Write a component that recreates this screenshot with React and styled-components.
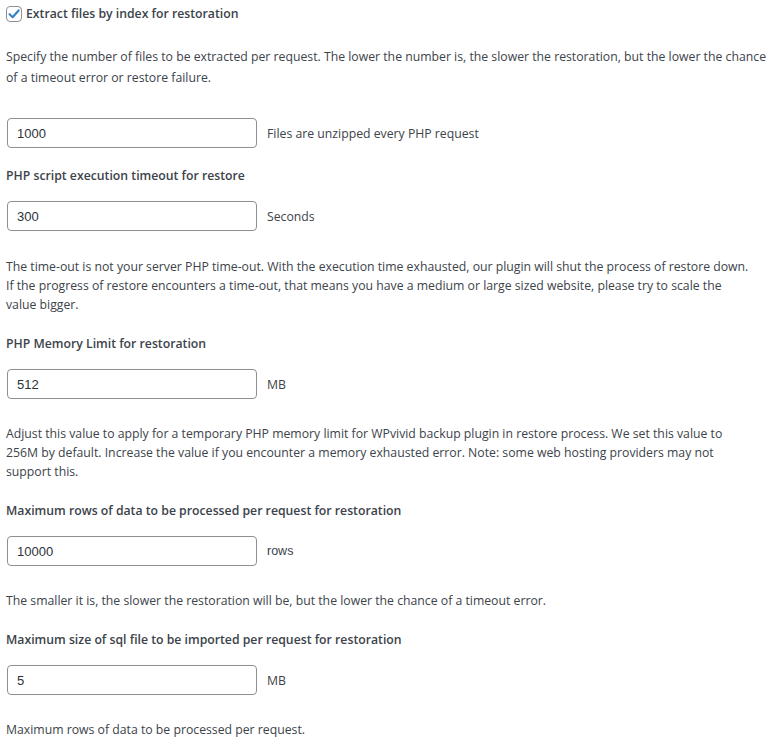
import React from "react";
import styled, { createGlobalStyle } from "styled-components";

const GlobalStyle = createGlobalStyle`
  body {
    margin: 0;
    background: #ffffff;
    color: #3c434a;
    font-family: "Open Sans", "Noto Sans", sans-serif;
    font-size: 12.25px;
  }
`;

const Page = styled.div`
  padding: 6px 6px 0 6px;
`;

const CheckRow = styled.label`
  display: flex;
  align-items: center;
  gap: 4px;
  height: 16px;
  font-weight: 600;
  line-height: 16px;
  cursor: pointer;
`;

const Box = styled.span`
  display: inline-flex;
  align-items: center;
  justify-content: center;
  width: 14px;
  height: 14px;
  border: 1px solid #8c8f94;
  border-radius: 4px;
  background: #fff;
`;

const Description = styled.p`
  margin: ${(p) => p.$top}px 0 0 0;
  max-width: ${(p) => (p.$narrow ? "745px" : "none")};
  line-height: ${(p) => p.$lh || 19}px;
`;

const Heading = styled.div`
  margin-top: ${(p) => p.$top || 18}px;
  font-weight: 600;
  line-height: 19px;
`;

const FieldRow = styled.div`
  display: flex;
  align-items: center;
  gap: 10px;
  margin-top: ${(p) => p.$top || 16}px;
  padding-left: 1px;
`;

const TextInput = styled.input`
  box-sizing: border-box;
  width: 250px;
  height: 30px;
  padding: 0 9px;
  border: 1px solid #8c8f94;
  border-radius: 4px;
  background: #fff;
  color: #2c3338;
  font-family: "Liberation Sans", Arial, sans-serif;
  font-size: 13px;
  outline: none;
`;

const Unit = styled.span`
  font-family: ${(p) => (p.$plain ? '"Liberation Sans", Arial, sans-serif' : "inherit")};
  font-size: ${(p) => (p.$plain ? "12.5px" : "inherit")};
`;

function Check() {
  return (
    <Box>
      <svg width="14" height="14" viewBox="0 0 14 14">
        <path d="M2.6 7.2 L5.6 10.2 L11.6 3.4" fill="none" stroke="#3582c4" strokeWidth="2.2" strokeLinecap="round" strokeLinejoin="round" />
      </svg>
    </Box>
  );
}

function Field({ value, unit, plain, top }) {
  return (
    <FieldRow $top={top}>
      <TextInput type="text" defaultValue={value} />
      <Unit $plain={plain}>{unit}</Unit>
    </FieldRow>
  );
}

export default function App() {
  return (
    <>
      <GlobalStyle />
      <Page>
        <CheckRow>
          <Check />
          Extract files by index for restoration
        </CheckRow>
        <Description $top={24} $lh={21}>
          Specify the number of files to be extracted per request. The lower the number is, the slower the restoration, but the lower the chance of a timeout error or restore failure.
        </Description>
        <Field value="1000" unit="Files are unzipped every PHP request" top={30} />

        <Heading>PHP script execution timeout for restore</Heading>
        <Field value="300" unit="Seconds" />
        <Description $top={26} $narrow>
          The time-out is not your server PHP time-out. With the execution time exhausted, our plugin will shut the process of restore down.
          <br />
          If the progress of restore encounters a time-out, that means you have a medium or large sized website, please try to scale the value bigger.
        </Description>

        <Heading $top={20}>PHP Memory Limit for restoration</Heading>
        <Field value="512" unit="MB" />
        <Description $top={25} $narrow>
          Adjust this value to apply for a temporary PHP memory limit for WPvivid backup plugin in restore process. We set this value to 256M by default. Increase the value if you encounter a memory exhausted error. Note: some web hosting providers may not support this.
        </Description>

        <Heading $top={20}>Maximum rows of data to be processed per request for restoration</Heading>
        <Field value="10000" unit="rows" plain />
        <Description $top={25}>
          The smaller it is, the slower the restoration will be, but the lower the chance of a timeout error.
        </Description>

        <Heading $top={20}>Maximum size of sql file to be imported per request for restoration</Heading>
        <Field value="5" unit="MB" />
        <Description $top={25}>Maximum rows of data to be processed per request.</Description>
      </Page>
    </>
  );
}
